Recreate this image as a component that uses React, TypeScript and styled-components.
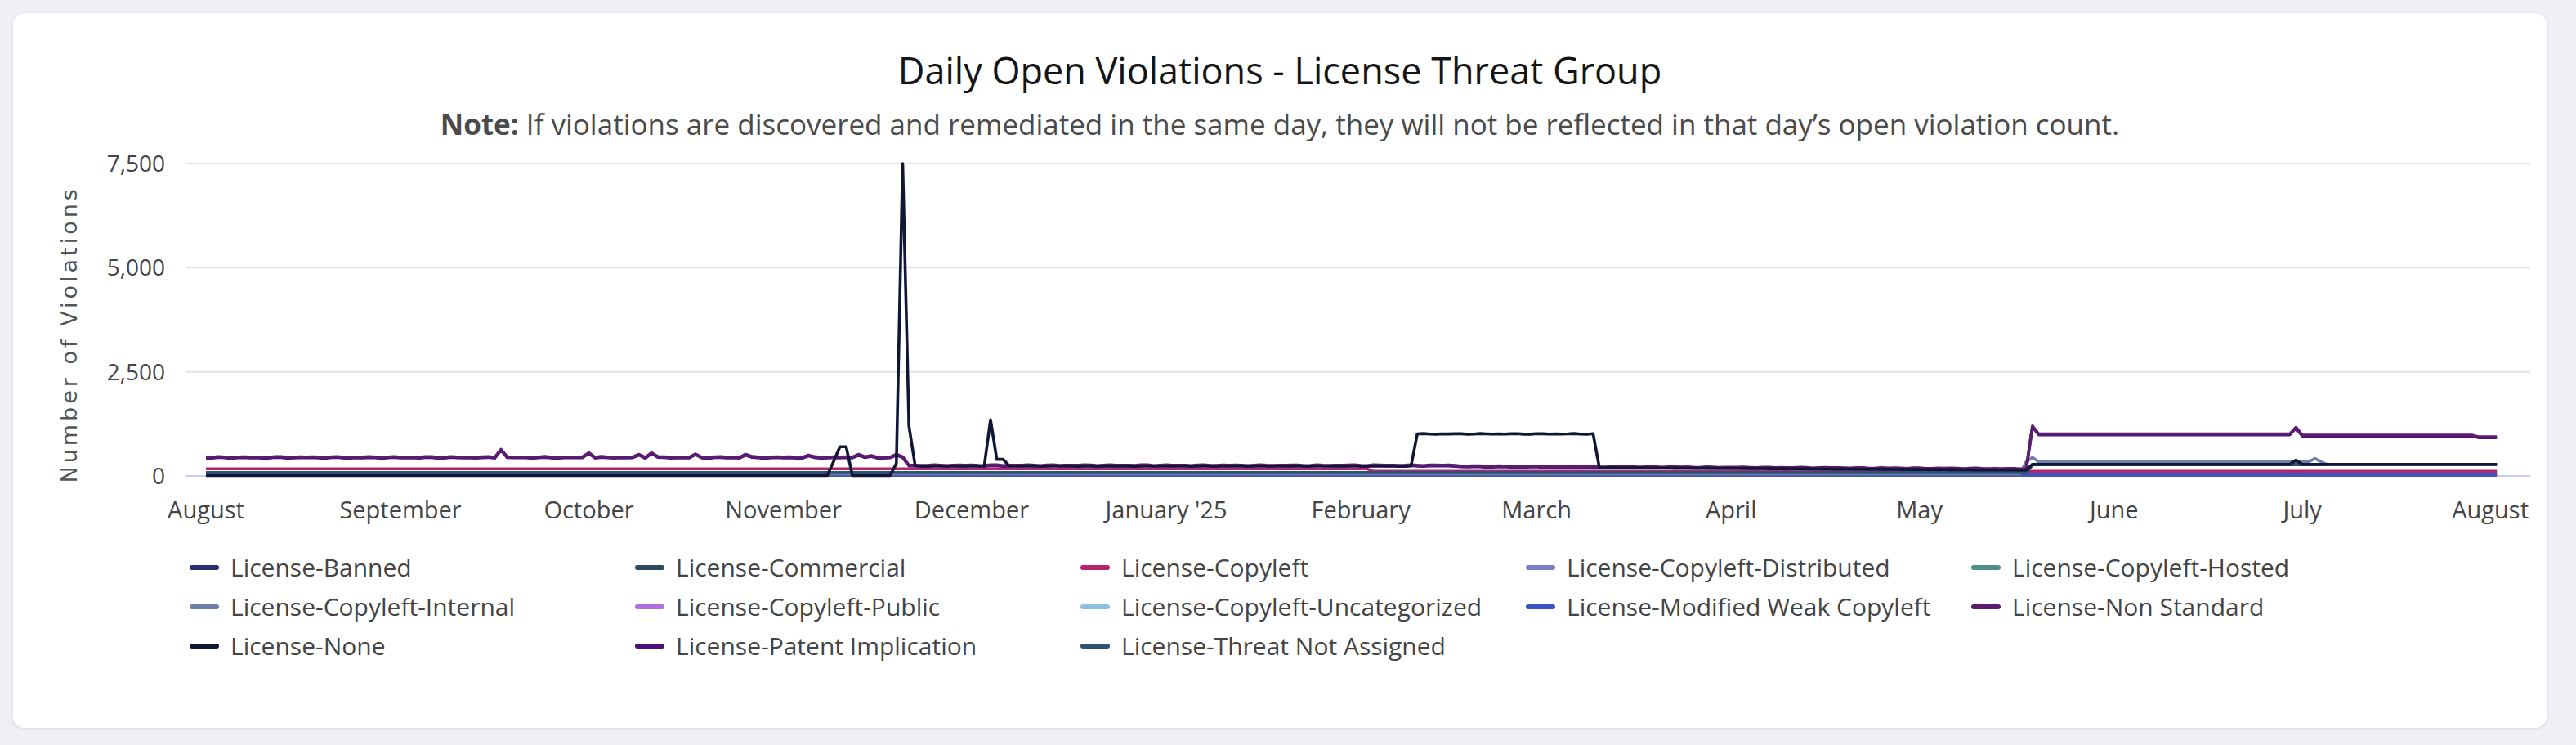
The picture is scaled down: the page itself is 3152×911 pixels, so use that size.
import React from "react";
import styled, { createGlobalStyle } from "styled-components";

const Global = createGlobalStyle`
  html, body { margin: 0; padding: 0; background: #eef0f4; }
  body { font-family: "Open Sans", "Liberation Sans", sans-serif; }
`;

const Page = styled.div`
  padding: 16px 36px 20px 16px;
`;

const Card = styled.div`
  background: #ffffff;
  border-radius: 14px;
  box-shadow: 0 1px 4px rgba(40, 50, 80, 0.12);
  height: 874px;
  box-sizing: border-box;
  padding-top: 40px;
  display: flex;
  flex-direction: column;
  align-items: stretch;
`;

const Title = styled.h1`
  margin: 0;
  text-align: center;
  font-weight: 400;
  font-size: 45px;
  line-height: 60px;
  color: #151515;
`;

const Note = styled.p`
  margin: 14px 0 0;
  text-align: center;
  font-size: 35px;
  line-height: 44px;
  color: #4a4a4a;
  b { font-weight: 700; }
`;

const ChartSvg = styled.svg`
  display: block;
  margin-top: 4px;
`;

const Legend = styled.div`
  display: grid;
  grid-template-columns: repeat(5, 545px);
  row-gap: 12px;
  padding-left: 216px;
  margin-top: 28px;
`;

const Item = styled.div`
  display: flex;
  align-items: center;
  gap: 14px;
  font-size: 30px;
  line-height: 36px;
  color: #444;
`;

const Swatch = styled.span<{ $c: string }>`
  width: 36px;
  height: 6px;
  border-radius: 3px;
  background: ${(p) => p.$c};
`;

const C = {
  banned: "#22306e",
  commercial: "#2c4a5e",
  copyleft: "#b3266f",
  dist: "#7a80c6",
  hosted: "#4f9188",
  internal: "#6f80a8",
  pub: "#b06ee0",
  uncat: "#8dc1e3",
  weak: "#3c55c2",
  nonstd: "#5b1b6e",
  none: "#0f1734",
  patent: "#4a117c",
  tna: "#2f5173",
};

const legend: [string, string][] = [
  ["License-Banned", C.banned],
  ["License-Commercial", C.commercial],
  ["License-Copyleft", C.copyleft],
  ["License-Copyleft-Distributed", C.dist],
  ["License-Copyleft-Hosted", C.hosted],
  ["License-Copyleft-Internal", C.internal],
  ["License-Copyleft-Public", C.pub],
  ["License-Copyleft-Uncategorized", C.uncat],
  ["License-Modified Weak Copyleft", C.weak],
  ["License-Non Standard", C.nonstd],
  ["License-None", C.none],
  ["License-Patent Implication", C.patent],
  ["License-Threat Not Assigned", C.tna],
];

const OX = -16;
const OY = -190;
const X = (d: number) => 252 + d * 7.68 + OX;
const Y = (v: number) => 594 - v * (382 / 7500) + OY;
const noise = (d: number, k: number) => Math.sin(d * 1.7 + k) * Math.cos(d * 0.37 + k * 2);

const nonStd = (d: number) => {
  const spikes: Record<number, number> = { 47: 640, 61: 560, 69: 520, 71: 560, 78: 530, 86: 520, 96: 500, 104: 520, 106: 490, 110: 520 };
  if (d < 112) return spikes[d] ?? 455 + noise(d, 1) * 15;
  if (d < 200) return 260 + noise(d, 2) * 12;
  if (d < 291) return 240 - (d - 200) * 0.7 + noise(d, 3) * 10;
  if (d === 291) return 1200;
  if (d === 333) return 1170;
  if (d < 333) return 1010;
  if (d < 362) return 980;
  return 940;
};
const none = (d: number) => {
  if (d < 100) return 10;
  if (d === 100) return 350;
  if (d === 101 || d === 102) return 700;
  if (d < 110) return 10;
  if (d === 110) return 300;
  if (d === 111) return 7500;
  if (d === 112) return 1200;
  if (d === 125) return 1350;
  if (d === 126 || d === 127) return 400;
  if (d < 193) return 240 + noise(d, 4) * 6;
  if (d < 222) return 1010 + noise(d, 5) * 10;
  if (d < 291) return 200 - (d - 222) * 0.9;
  if (d === 333) return 380;
  return 280;
};
const patent = (d: number) => nonStd(d) - 20;
const copyleft = (d: number) => (d < 186 ? 170 : 110);
const commercial = (d: number) => (d < 291 ? 70 : 270);
const internal = (d: number) => {
  if (d < 290) return 50;
  if (d === 291) return 450;
  if (d === 336) return 420;
  if (d < 338) return 340;
  return 270;
};
const tna = (d: number) => (d < 291 ? 80 : 280);
const banned = () => 20;

const path = (f: (d: number) => number) => {
  let s = "";
  for (let d = 0; d <= 365; d++) s += `${d ? "L" : "M"}${X(d).toFixed(1)},${Y(f(d)).toFixed(1)}`;
  return s;
};

const series: [(d: number) => number, string][] = [
  [banned, C.banned],
  [() => 30, C.weak],
  [copyleft, C.copyleft],
  [commercial, C.commercial],
  [internal, C.internal],
  [tna, C.tna],
  [patent, C.patent],
  [nonStd, C.nonstd],
  [none, C.none],
];

const months: [string, number][] = [
  ["August", 0], ["September", 31], ["October", 61], ["November", 92], ["December", 122],
  ["January '25", 153], ["February", 184], ["March", 212], ["April", 243], ["May", 273],
  ["June", 304], ["July", 334],
];

const Chart = () => (
  <ChartSvg width={3100} height={470} viewBox="0 0 3100 470">
    <text
      transform={`translate(78 ${Y(3400)}) rotate(-90)`}
      textAnchor="middle"
      fontFamily="'DejaVu Sans', sans-serif"
      fontSize={27}
      letterSpacing={4}
      fill="#555"
    >
      Number of Violations
    </text>
    {[0, 2500, 5000, 7500].map((v) => (
      <g key={v}>
        <line x1={228 + OX} x2={3096 + OX} y1={Y(v)} y2={Y(v)} stroke={v ? "#e3e3e6" : "#c9cde6"} strokeWidth={2} />
        <text x={202 + OX} y={Y(v) + 10} textAnchor="end" fontSize={28} fill="#444" fontFamily="'Open Sans', sans-serif">
          {v.toLocaleString("en-US")}
        </text>
      </g>
    ))}
    {series.map(([f, c], i) => (
      <path key={i} d={path(f)} fill="none" stroke={c} strokeWidth={3.6} strokeLinejoin="round" />
    ))}
    {months.map(([m, d]) => (
      <text key={m} x={X(d)} y={646 + OY} textAnchor="middle" fontSize={29} fill="#444" fontFamily="'Open Sans', sans-serif">
        {m}
      </text>
    ))}
    <text x={3094 + OX} y={646 + OY} textAnchor="end" fontSize={29} fill="#444" fontFamily="'Open Sans', sans-serif">
      August
    </text>
  </ChartSvg>
);

export default function App() {
  return (
    <Page>
      <Global />
      <Card>
        <Title>Daily Open Violations - License Threat Group</Title>
        <Note>
          <b>Note:</b> If violations are discovered and remediated in the same day, they will not be reflected in that day’s open violation count.
        </Note>
        <Chart />
        <Legend>
          {legend.map(([n, c]) => (
            <Item key={n}>
              <Swatch $c={c} />
              {n}
            </Item>
          ))}
        </Legend>
      </Card>
    </Page>
  );
}
